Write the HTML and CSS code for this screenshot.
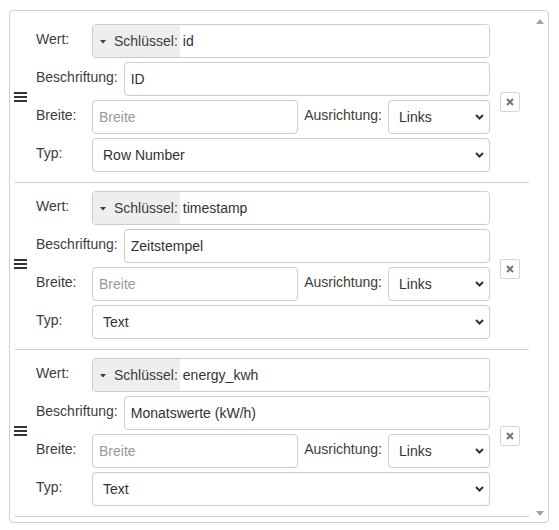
FILE: index.html
```html
<!DOCTYPE html>
<html lang="de">
<head>
<meta charset="utf-8">
<title>Spalten</title>
<link rel="stylesheet" href="styles.css">
</head>
<body>
<div class="panel">
  <div class="list">
    <div class="item">
      <div class="handle"><svg width="13" height="10" viewBox="0 0 13 10"><rect y="0" width="13" height="2"/><rect y="4" width="13" height="2"/><rect y="8" width="13" height="2"/></svg></div>
      <div class="form">
        <div class="row">
          <label class="lbl">Wert:</label>
          <div class="group">
            <span class="addon"><svg class="caret" width="6" height="4" viewBox="0 0 6 4"><polygon points="0,0 6,0 3,3.5"/></svg>Schlüssel:</span>
            <input class="ginput" type="text" value="id">
          </div>
        </div>
        <div class="row">
          <label class="lbl">Beschriftung:</label>
          <input class="field" type="text" value="ID">
        </div>
        <div class="row">
          <label class="lbl">Breite:</label>
          <input class="field" type="text" placeholder="Breite">
          <label class="lbl lbl-mid">Ausrichtung:</label>
          <select class="sel sel-small"><option>Links</option></select>
        </div>
        <div class="row">
          <label class="lbl">Typ:</label>
          <select class="sel"><option>Row Number</option></select>
        </div>
      </div>
      <button class="del" type="button"><svg width="8" height="8" viewBox="0 0 8 8"><path d="M1 1 L7 7 M7 1 L1 7"/></svg></button>
    </div>

    <div class="item">
      <div class="handle"><svg width="13" height="10" viewBox="0 0 13 10"><rect y="0" width="13" height="2"/><rect y="4" width="13" height="2"/><rect y="8" width="13" height="2"/></svg></div>
      <div class="form">
        <div class="row">
          <label class="lbl">Wert:</label>
          <div class="group">
            <span class="addon"><svg class="caret" width="6" height="4" viewBox="0 0 6 4"><polygon points="0,0 6,0 3,3.5"/></svg>Schlüssel:</span>
            <input class="ginput" type="text" value="timestamp">
          </div>
        </div>
        <div class="row">
          <label class="lbl">Beschriftung:</label>
          <input class="field" type="text" value="Zeitstempel">
        </div>
        <div class="row">
          <label class="lbl">Breite:</label>
          <input class="field" type="text" placeholder="Breite">
          <label class="lbl lbl-mid">Ausrichtung:</label>
          <select class="sel sel-small"><option>Links</option></select>
        </div>
        <div class="row">
          <label class="lbl">Typ:</label>
          <select class="sel"><option>Text</option></select>
        </div>
      </div>
      <button class="del" type="button"><svg width="8" height="8" viewBox="0 0 8 8"><path d="M1 1 L7 7 M7 1 L1 7"/></svg></button>
    </div>

    <div class="item">
      <div class="handle"><svg width="13" height="10" viewBox="0 0 13 10"><rect y="0" width="13" height="2"/><rect y="4" width="13" height="2"/><rect y="8" width="13" height="2"/></svg></div>
      <div class="form">
        <div class="row">
          <label class="lbl">Wert:</label>
          <div class="group">
            <span class="addon"><svg class="caret" width="6" height="4" viewBox="0 0 6 4"><polygon points="0,0 6,0 3,3.5"/></svg>Schlüssel:</span>
            <input class="ginput" type="text" value="energy_kwh">
          </div>
        </div>
        <div class="row">
          <label class="lbl">Beschriftung:</label>
          <input class="field" type="text" value="Monatswerte (kW/h)">
        </div>
        <div class="row">
          <label class="lbl">Breite:</label>
          <input class="field" type="text" placeholder="Breite">
          <label class="lbl lbl-mid">Ausrichtung:</label>
          <select class="sel sel-small"><option>Links</option></select>
        </div>
        <div class="row">
          <label class="lbl">Typ:</label>
          <select class="sel"><option>Text</option></select>
        </div>
      </div>
      <button class="del" type="button"><svg width="8" height="8" viewBox="0 0 8 8"><path d="M1 1 L7 7 M7 1 L1 7"/></svg></button>
    </div>
  </div>
  <div class="scrollbar">
    <svg width="8" height="5" viewBox="0 0 8 5"><polygon points="0,5 8,5 4,0"/></svg>
    <svg width="8" height="5" viewBox="0 0 8 5"><polygon points="0,0 8,0 4,5"/></svg>
  </div>
</div>
</body>
</html>
```

FILE: styles.css
```css
* { box-sizing: border-box; }

html, body {
  margin: 0;
  background: #ffffff;
}

body {
  padding: 10px 0 0 9px;
  font-family: "Liberation Sans", Arial, sans-serif;
  font-size: 14px;
  color: #333333;
}

.panel {
  width: 540px;
  height: 513px;
  border: 1px solid #cfcfcf;
  border-radius: 4px;
  display: flex;
  overflow: hidden;
}

.list {
  flex: 1;
  padding: 5px 2px 5px 5px;
  overflow: hidden;
}

.item {
  display: flex;
  align-items: center;
  padding: 8px 9px 10px 0;
  border-bottom: 1px solid #cccccc;
}

.handle {
  width: 21px;
  flex: none;
  display: flex;
  margin-top: -2px;
}

.handle svg {
  margin-left: -1px;
  fill: #333333;
}

.form {
  width: 454px;
  flex: none;
  display: flex;
  flex-direction: column;
  gap: 4px;
}

.row {
  display: flex;
  align-items: flex-start;
  gap: 6px;
  height: 34px;
}

.lbl {
  min-width: 50px;
  line-height: 20px;
  padding-top: 5px;
  color: #3c3c3c;
  white-space: nowrap;
}

.lbl-mid {
  min-width: 0;
}

.field,
.group,
.sel {
  height: 34px;
  border: 1px solid #cccccc;
  border-radius: 4px;
  font-family: "Liberation Sans", Arial, sans-serif;
  font-size: 14px;
  color: #333333;
  background-color: #ffffff;
}

.field {
  flex: 1;
  min-width: 0;
  padding: 6px;
  outline: none;
}

.field::placeholder {
  color: #999999;
}

.group {
  flex: 1;
  display: flex;
  overflow: hidden;
}

.addon {
  display: flex;
  align-items: center;
  gap: 8px;
  padding: 0 2px 0 7px;
  background: #eeeeee;
  color: #3c3c3c;
  white-space: nowrap;
}

.caret {
  fill: #3c3c3c;
  margin-top: 1px;
}

.ginput {
  flex: 1;
  min-width: 0;
  border: none;
  padding: 6px 6px 6px 3px;
  font-family: "Liberation Sans", Arial, sans-serif;
  font-size: 14px;
  color: #333333;
  outline: none;
  background: #ffffff;
}

.sel {
  flex: 1;
  appearance: none;
  -webkit-appearance: none;
  padding: 0 24px 0 10px;
  background-image: url("data:image/svg+xml,%3Csvg xmlns='http://www.w3.org/2000/svg' width='9' height='6' viewBox='0 0 9 6'%3E%3Cpath d='M1 1 L4.5 4.5 L8 1' fill='none' stroke='%23333' stroke-width='2'/%3E%3C/svg%3E");
  background-repeat: no-repeat;
  background-position: right 5px center;
  outline: none;
}

.sel-small {
  flex: none;
  width: 102px;
}

.del {
  flex: none;
  width: 20px;
  height: 20px;
  margin: 8px 0 0 10px;
  padding: 0;
  border: 1px solid #d6d6d6;
  border-radius: 2px;
  background: #ffffff;
  display: flex;
  align-items: center;
  justify-content: center;
}

.del svg path {
  stroke: #777777;
  stroke-width: 2;
}

.scrollbar {
  width: 17px;
  flex: none;
  display: flex;
  flex-direction: column;
  justify-content: space-between;
  align-items: center;
  padding: 8px 0 6px 1px;
}

.scrollbar svg {
  fill: #a3a3a3;
}
```
